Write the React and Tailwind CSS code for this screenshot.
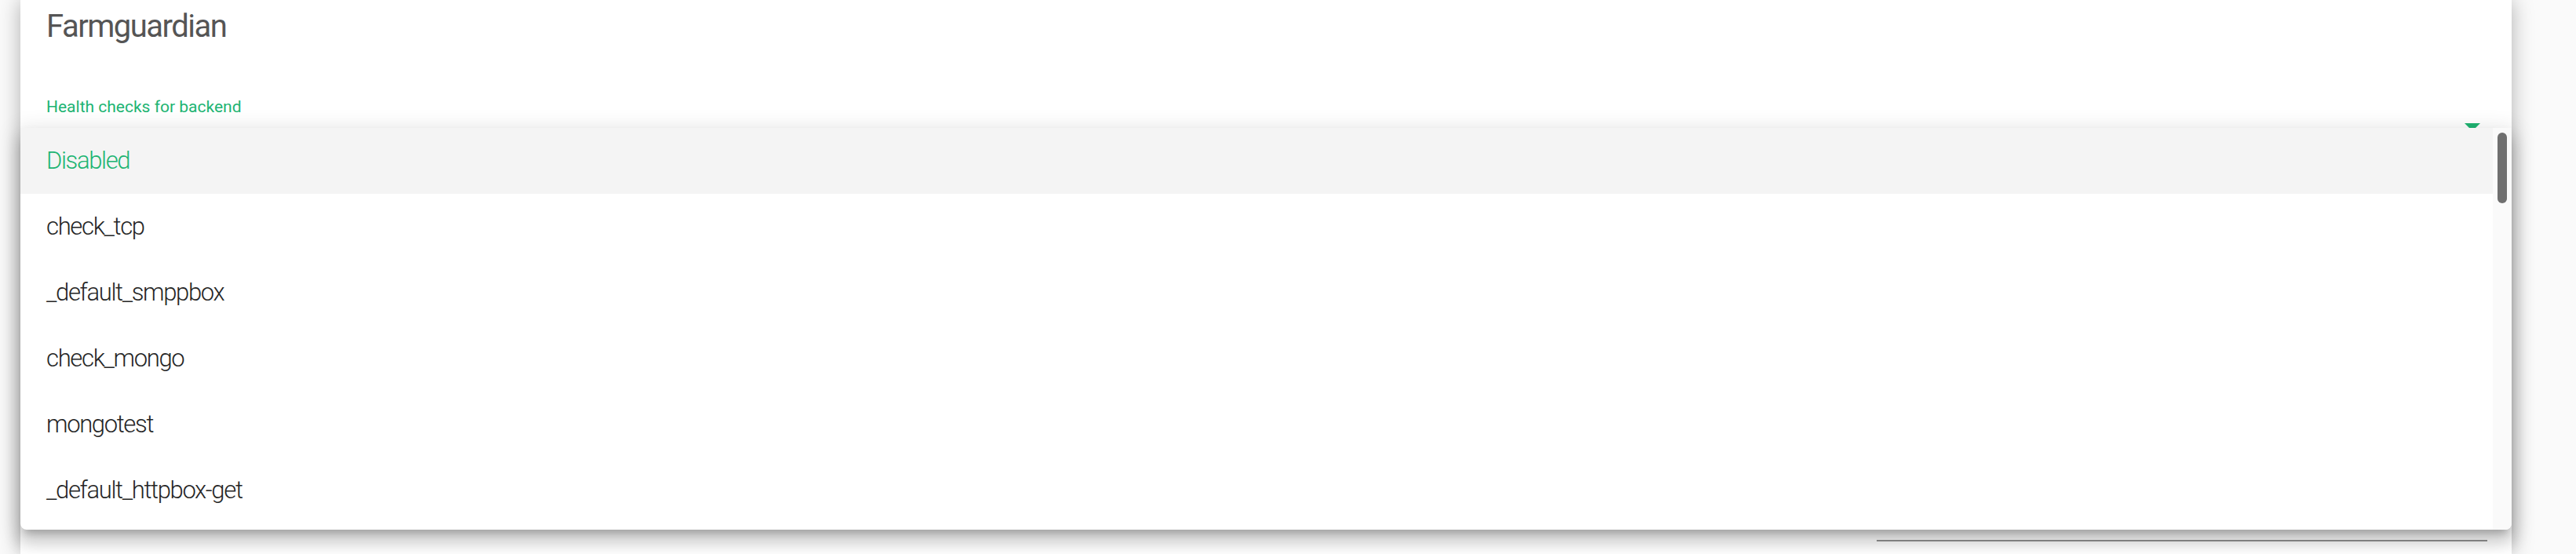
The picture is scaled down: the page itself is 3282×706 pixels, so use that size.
import { useState } from 'react'

// ─── Data ─────────────────────────────────────────────────────────────────────

const OPTIONS = [
  'Disabled',
  'check_tcp',
  '_default_smppbox',
  'check_mongo',
  'mongotest',
  '_default_httpbox-get',
]

// ─── Dropdown panel ───────────────────────────────────────────────────────────

function OptionsPanel({ selected, onPick }) {
  return (
    <div className="absolute left-0 right-0 top-[163px] h-[512px] flex bg-white rounded-b-[8px] overflow-hidden shadow-[0_10px_10px_-6px_rgba(0,0,0,0.2),0_16px_20px_2px_rgba(0,0,0,0.14),0_6px_28px_4px_rgba(0,0,0,0.12)]">
      <ul className="flex-1 flex flex-col pb-[8px]">
        {OPTIONS.map((opt) => {
          const active = opt === selected
          return (
            <li
              key={opt}
              onClick={() => onPick(opt)}
              className={
                active
                  ? 'h-[84px] shrink-0 flex items-center px-[33px] text-[31px] tracking-[-1.35px] font-light bg-[#f4f4f4] text-[#20b472] cursor-pointer'
                  : 'h-[84px] shrink-0 flex items-center px-[33px] text-[31px] tracking-[-1.35px] font-light text-[#262626] cursor-pointer'
              }
            >
              {opt}
            </li>
          )
        })}
      </ul>

      {/* scrollbar */}
      <div className="w-[24px] shrink-0 bg-[#fafafa] pt-[6px] pl-[6px]">
        <div className="w-[12px] h-[90px] rounded-full bg-[#6f6f6f]" />
      </div>
    </div>
  )
}

// ─── Page ─────────────────────────────────────────────────────────────────────

export default function App() {
  const [selected, setSelected] = useState('Disabled')

  return (
    <div
      className="w-[3282px] h-[706px] overflow-hidden bg-[#fafafa] flex pl-[26px] pr-[82px]"
      style={{ fontFamily: 'Roboto, "Noto Sans", sans-serif' }}
    >
      <div className="relative flex-1 flex flex-col px-[33px] bg-white shadow-[0_0_26px_rgba(0,0,0,0.3)]">
        <h2 className="mt-[10px] text-[40px] leading-[48px] tracking-[-1.5px] text-[#555555] font-normal">Farmguardian</h2>

        <label className="mt-[66px] text-[21px] leading-[24px] text-[#20b472]">Health checks for backend</label>

        {/* select arrow, mostly covered by the open menu */}
        <div className="mt-[9px] flex justify-end pr-[7px]">
          <div className="w-0 h-0 border-x-[10px] border-t-[10px] border-x-transparent border-t-[#20b472]" />
        </div>

        {/* next field's underline */}
        <div className="mt-[521px] flex justify-end -mr-[2px]">
          <div className="w-[778px] h-[2px] bg-[#949494]" />
        </div>

        <OptionsPanel selected={selected} onPick={setSelected} />
      </div>
    </div>
  )
}
